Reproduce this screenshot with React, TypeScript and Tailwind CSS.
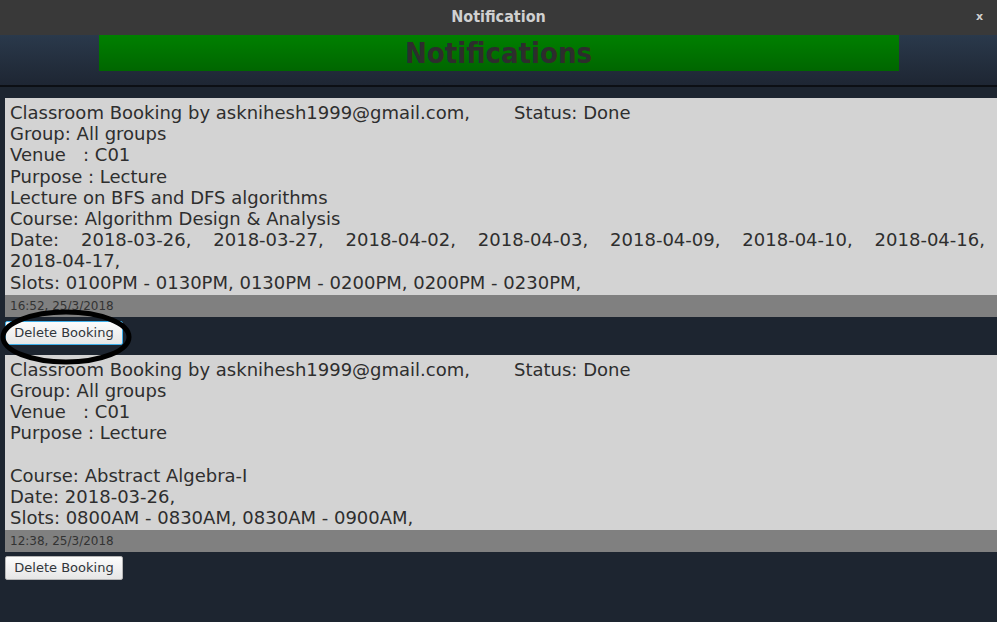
import React from 'react'

interface Booking {
  id: string
  email: string
  status: string
  group: string
  venue: string
  purpose: string
  description: string
  course: string
  dates: string[]
  slots: string[]
  createdAt: string
}

const bookings: Booking[] = [
  {
    id: '1',
    email: 'asknihesh1999@gmail.com',
    status: 'Done',
    group: 'All groups',
    venue: 'C01',
    purpose: 'Lecture',
    description: 'Lecture on BFS and DFS algorithms',
    course: 'Algorithm Design & Analysis',
    dates: ['2018-03-26', '2018-03-27', '2018-04-02', '2018-04-03', '2018-04-09', '2018-04-10', '2018-04-16', '2018-04-17'],
    slots: ['0100PM - 0130PM', '0130PM - 0200PM', '0200PM - 0230PM'],
    createdAt: '16:52, 25/3/2018',
  },
  {
    id: '2',
    email: 'asknihesh1999@gmail.com',
    status: 'Done',
    group: 'All groups',
    venue: 'C01',
    purpose: 'Lecture',
    description: '',
    course: 'Abstract Algebra-I',
    dates: ['2018-03-26'],
    slots: ['0800AM - 0830AM', '0830AM - 0900AM'],
    createdAt: '12:38, 25/3/2018',
  },
]

function BookingCard({ booking, focused }: { booking: Booking; focused?: boolean }) {
  return (
    <div>
      <div className="bg-[#d3d3d3] pl-[5px] pr-[12px] pt-[4px] pb-[2px] text-[18px] leading-[21.2px] text-[#2e2e2e]">
        <div>
          Classroom Booking by {booking.email},<span className="ml-[44px]">Status: {booking.status}</span>
        </div>
        <div>Group: {booking.group}</div>
        <div className="whitespace-pre">Venue   : {booking.venue}</div>
        <div>Purpose : {booking.purpose}</div>
        <div className="h-[21.2px]">{booking.description}</div>
        <div>Course: {booking.course}</div>
        <div className="text-justify">
          Date:{' '}
          {booking.dates.map((d) => (
            <React.Fragment key={d}>
              <span className="whitespace-nowrap">{d},</span>{' '}
            </React.Fragment>
          ))}
        </div>
        <div>Slots: {booking.slots.map((s) => `${s}, `).join('')}</div>
      </div>
      <div className="bg-[#808080] h-[22px] pl-[5px] pt-[4px] text-[12px] leading-[14px] text-[#333]">
        {booking.createdAt}
      </div>
      <div className="pt-[3px] pb-[10px]">
        <button
          className={`h-[24px] w-[118px] rounded-[2px] border bg-gradient-to-b from-[#fcfcfc] to-[#e6e6e6] text-[13px] text-[#31363b] ${
            focused ? 'border-[#3daee9]' : 'border-[#b5b5b5]'
          }`}
        >
          Delete Booking
        </button>
      </div>
    </div>
  )
}

export default function App() {
  return (
    <div
      className="w-[997px] h-[622px] overflow-hidden bg-[#1d2530] relative"
      style={{ fontFamily: '"DejaVu Sans", sans-serif' }}
    >
      {/* Title bar */}
      <div className="h-[35px] bg-[#393939] flex items-center justify-center relative">
        <span
          className="text-[16px] font-bold text-[#d0d0d0] -mt-[2px]"
          style={{ fontFamily: '"DejaVu Sans Condensed", "DejaVu Sans", sans-serif', fontStretch: 'condensed' }}
        >
          Notification
        </span>
        <span className="absolute right-[14px] top-[9px] text-[11px] font-bold text-[#d0d0d0]">x</span>
      </div>

      {/* Header */}
      <div className="h-[52px] bg-gradient-to-b from-[#2a394b] to-[#1e2633] border-b-2 border-[#0c0f14]">
        <div className="mx-auto w-[800px] h-[36px] bg-gradient-to-b from-[#008000] to-[#006600] flex items-center justify-center">
          <span
            className="text-[29px] font-bold text-[#2d2d2d] leading-none"
            style={{ fontFamily: '"DejaVu Sans Condensed", "DejaVu Sans", sans-serif', fontStretch: 'condensed' }}
          >
            Notifications
          </span>
        </div>
      </div>

      {/* List */}
      <div className="pl-[5px] pt-[11px]">
        {bookings.map((b, i) => (
          <BookingCard key={b.id} booking={b} focused={i === 0} />
        ))}
      </div>

      {/* annotation ellipse */}
      <svg className="absolute left-0 top-[308px]" width="140" height="58" viewBox="0 0 140 58">
        <ellipse cx="66" cy="29" rx="63" ry="25" fill="none" stroke="#000" strokeWidth="5" />
      </svg>
    </div>
  )
}
